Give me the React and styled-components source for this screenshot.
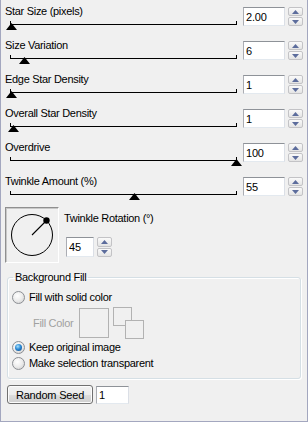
import React from 'react';
import styled, { createGlobalStyle } from 'styled-components';

const Global = createGlobalStyle`
  html, body { margin: 0; padding: 0; background: #f0f0f0; }
  body { font-family: "Liberation Sans", Arial, sans-serif; font-size: 11px; color: #000; }
`;

const Panel = styled.div`
  box-sizing: border-box;
  width: 308px;
  height: 422px;
  padding: 5px 4px 0 4px;
  background: #f0f0f0;
  border-left: 1px solid #a3a7bf;
  border-right: 1px solid #a3a7bf;
  border-bottom: 1px solid #a3a7bf;
  display: flex;
  flex-direction: column;
  font-family: "Liberation Sans", Arial, sans-serif;
  font-size: 11px;
  letter-spacing: -0.3px;
  color: #000;
`;

const SliderList = styled.div`
  display: flex;
  flex-direction: column;
  gap: 3px;
`;

const SliderRow = styled.div`
  display: flex;
  height: 31px;
  column-gap: 6px;
`;

const LeftCol = styled.div`
  width: 232px;
  display: flex;
  flex-direction: column;
`;

const Label = styled.div`
  line-height: 13px;
  height: 13px;
  white-space: nowrap;
  color: ${p => (p.$disabled ? '#a0a0a0' : '#000')};
`;

const Track = styled.div`
  position: relative;
  margin: 3px 0 0 5px;
  height: 3px;
  border: 1px solid #000;
  border-top: none;
`;

const Thumb = styled.svg`
  position: absolute;
  top: 2px;
  width: 11px;
  height: 7px;
  display: block;
`;

const ValueGroup = styled.div`
  display: flex;
  align-items: flex-start;
  gap: ${p => p.$gap || 3}px;
  padding-top: ${p => p.$top ?? 2}px;
  padding-left: ${p => p.$left || 0}px;
`;

const NumberBox = styled.input`
  box-sizing: border-box;
  width: ${p => p.$w || 42}px;
  height: ${p => p.$h || 19}px;
  margin: ${p => p.$mt || 0}px 0 0 0;
  padding: 0 2px;
  border: 1px solid;
  border-color: #8e9298 #dbdfe6 #e3e9ef #abadb3;
  background: #fff;
  font-family: "Liberation Sans", Arial, sans-serif;
  font-size: 11px;
  letter-spacing: -0.2px;
  color: #000;
  outline: none;
`;

const Spinner = styled.div`
  width: 15px;
  height: ${p => p.$h || 19}px;
  display: flex;
  flex-direction: column;
  gap: 1px;
`;

const SpinButton = styled.div`
  flex: 1;
  box-sizing: border-box;
  border: 1px solid #c3c3c6;
  border-radius: 2px;
  background: linear-gradient(#fafafa, #e4e4e4);
  display: flex;
  align-items: center;
  justify-content: center;
`;

const Arrow = styled.svg`
  width: 7px;
  height: 4px;
  display: block;
`;

const DialRow = styled.div`
  display: flex;
  margin-top: 1px;
  gap: 5px;
`;

const DialBox = styled.div`
  box-sizing: border-box;
  width: 54px;
  height: 56px;
  border: 1px solid;
  border-color: #8f8f8f #ffffff #ffffff #8f8f8f;
  box-shadow: inset 1px 1px 0 #c8c8c8;
  display: flex;
  align-items: center;
  justify-content: center;
`;

const RotationCol = styled.div`
  display: flex;
  flex-direction: column;
  padding-top: 5px;
`;

const Fieldset = styled.fieldset`
  margin: 8px 2px 0 2px;
  padding: 5px 0 7px 4px;
  border: 1px solid #d5dfe5;
  border-radius: 3px;
  box-shadow: inset 1px 1px 0 #fff, 1px 1px 0 #fff;
  min-width: 0;
  display: flex;
  flex-direction: column;
`;

const Legend = styled.legend`
  padding: 0 2px;
  margin-left: 1px;
  line-height: 13px;
`;

const RadioRow = styled.label`
  display: flex;
  align-items: center;
  gap: 4px;
  height: 16px;
  line-height: 16px;
  margin-top: ${p => p.$mt || 0}px;
`;

const Radio = styled.span`
  position: relative;
  box-sizing: border-box;
  width: 13px;
  height: 13px;
  border-radius: 50%;
  border: 1px solid #8c8f94;
  background: radial-gradient(circle at 40% 35%, #ffffff 0%, #ececec 50%, #c9c9c9 100%);
  flex: none;
  &::after {
    content: '';
    display: ${p => (p.$checked ? 'block' : 'none')};
    position: absolute;
    left: 2px;
    top: 2px;
    width: 7px;
    height: 7px;
    border-radius: 50%;
    background: radial-gradient(circle at 40% 35%, #a9e2fb 0%, #2b8ad6 45%, #0b3f7c 100%);
  }
`;

const FillRow = styled.div`
  display: flex;
  align-items: center;
  margin-top: 3px;
  padding-left: 21px;
  height: 30px;
`;

const Swatch = styled.div`
  box-sizing: border-box;
  width: 30px;
  height: 30px;
  margin-left: 6px;
  border: 1px solid #b2b2b2;
  background: #f0f0f0;
`;

const SwapBox = styled.div`
  position: relative;
  width: 31px;
  height: 31px;
  margin-left: 4px;
  margin-top: -1px;
`;

const MiniSwatch = styled.div`
  position: absolute;
  box-sizing: border-box;
  width: 19px;
  height: 19px;
  left: ${p => p.$x}px;
  top: ${p => p.$y}px;
  border: 1px solid #b2b2b2;
  background: #f0f0f0;
`;

const ButtonRow = styled.div`
  display: flex;
  align-items: flex-start;
  gap: 3px;
  margin-top: 6px;
  padding-left: 2px;
`;

const PushButton = styled.button`
  box-sizing: border-box;
  width: 86px;
  height: 19px;
  margin: 0;
  padding: 0;
  border: 1px solid #707070;
  border-radius: 3px;
  background: linear-gradient(#f2f2f2 0%, #ebebeb 50%, #dddddd 51%, #cfcfcf 100%);
  box-shadow: inset 0 0 0 1px #fcfcfc;
  font-family: "Liberation Sans", Arial, sans-serif;
  font-size: 11px;
  letter-spacing: -0.2px;
  color: #000;
`;

function Spin({ h }) {
  return (
    <Spinner $h={h}>
      <SpinButton>
        <Arrow viewBox="0 0 7 4"><polygon points="3.5,0 7,4 0,4" fill="#5c6c9c" /></Arrow>
      </SpinButton>
      <SpinButton>
        <Arrow viewBox="0 0 7 4"><polygon points="0,0 7,0 3.5,4" fill="#5c6c9c" /></Arrow>
      </SpinButton>
    </Spinner>
  );
}

const sliders = [
  { label: 'Star Size (pixels)', value: '2.00', pct: 0 },
  { label: 'Size Variation', value: '6', pct: 0.06 },
  { label: 'Edge Star Density', value: '1', pct: 0 },
  { label: 'Overall Star Density', value: '1', pct: 0.01 },
  { label: 'Overdrive', value: '100', pct: 1 },
  { label: 'Twinkle Amount (%)', value: '55', pct: 0.55 },
];

function SliderControl({ label, value, pct }) {
  return (
    <SliderRow>
      <LeftCol>
        <Label>{label}</Label>
        <Track>
          <Thumb viewBox="0 0 11 7" style={{ left: pct * 225 - 5.5 }}>
            <polygon points="5.5,0 11,7 0,7" fill="#000" />
          </Thumb>
        </Track>
      </LeftCol>
      <ValueGroup>
        <NumberBox readOnly value={value} />
        <Spin />
      </ValueGroup>
    </SliderRow>
  );
}

export default function App() {
  return (
    <>
      <Global />
      <Panel>
        <SliderList>
          {sliders.map(s => (
            <SliderControl key={s.label} {...s} />
          ))}
        </SliderList>
        <DialRow>
          <DialBox>
            <svg width="46" height="46" viewBox="0 0 46 46">
              <circle cx="23" cy="23" r="20.5" fill="none" stroke="#000" strokeWidth="1" />
              <line x1="23" y1="23" x2="37.5" y2="8.5" stroke="#000" strokeWidth="1.1" />
              <circle cx="37.5" cy="8.5" r="3.2" fill="#000" />
            </svg>
          </DialBox>
          <RotationCol>
            <Label>Twinkle Rotation (°)</Label>
            <ValueGroup $top={12} $gap={3} $left={2}>
              <NumberBox readOnly value="45" $w={28} $h={20} />
              <Spin h={20} />
            </ValueGroup>
          </RotationCol>
        </DialRow>
        <Fieldset>
          <Legend>Background Fill</Legend>
          <RadioRow>
            <Radio />
            <span>Fill with solid color</span>
          </RadioRow>
          <FillRow>
            <Label $disabled>Fill Color</Label>
            <Swatch />
            <SwapBox>
              <MiniSwatch $x={0} $y={0} />
              <MiniSwatch $x={12} $y={13} />
            </SwapBox>
          </FillRow>
          <RadioRow $mt={1}>
            <Radio $checked />
            <span>Keep original image</span>
          </RadioRow>
          <RadioRow>
            <Radio />
            <span>Make selection transparent</span>
          </RadioRow>
        </Fieldset>
        <ButtonRow>
          <PushButton>Random Seed</PushButton>
          <NumberBox readOnly value="1" $w={33} $h={18} $mt={1} />
        </ButtonRow>
      </Panel>
    </>
  );
}
